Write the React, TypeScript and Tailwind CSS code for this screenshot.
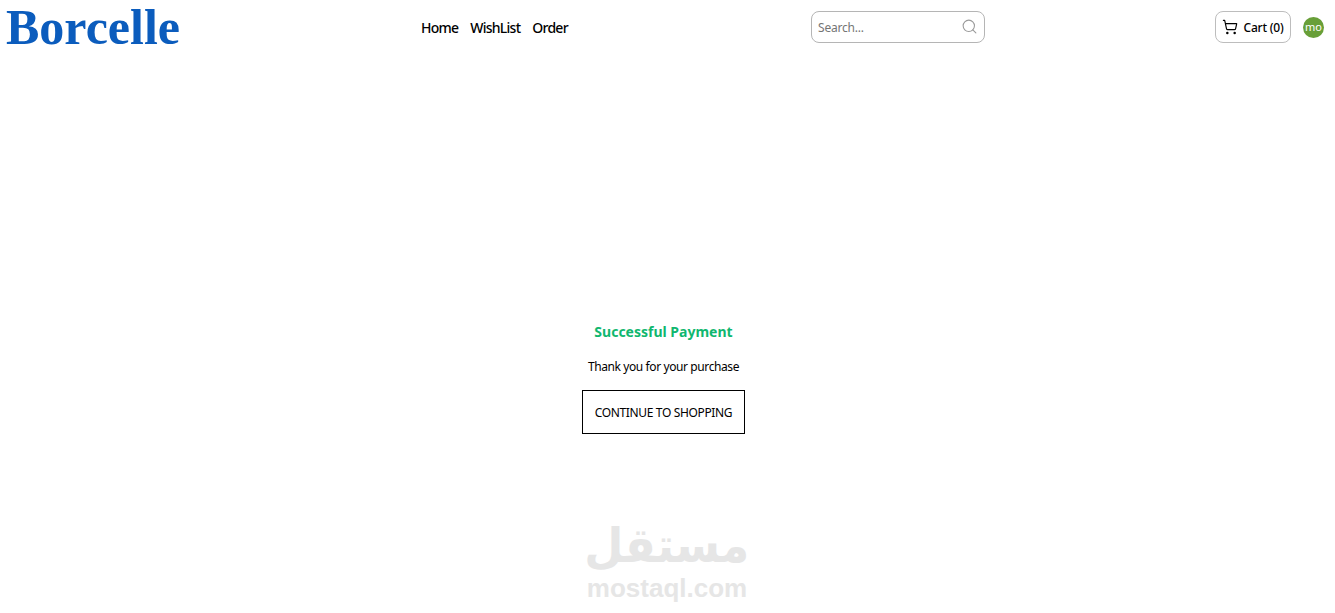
import { Search, ShoppingCart } from 'lucide-react';

const uiFont = "font-['Noto_Sans','Open_Sans',sans-serif]";

const navLinks = ['Home', 'WishList', 'Order'];

const Navbar = () => (
  <header className="flex h-[54px] items-center pl-[5px] pr-[11px]">
    {/* Logo */}
    <a className="w-[176px] pl-px text-[50px] leading-none font-bold text-[#0b5cbd] font-['Liberation_Serif',serif]">
      Borcelle
    </a>

    {/* Navigation */}
    <nav className="ml-[240px] flex items-center gap-[12px] text-[14px] font-medium tracking-[-0.75px] text-black">
      {navLinks.map((link) => (
        <a key={link}>{link}</a>
      ))}
    </nav>

    {/* Search */}
    <div className="ml-auto flex h-[32px] w-[174px] items-center justify-between rounded-lg border border-[#b5b5b5] pl-[6px] pr-[6px]">
      <span className="pt-[2px] text-[12px] tracking-[-0.2px] text-[#757575]">Search...</span>
      <Search className="h-[17px] w-[17px] -translate-y-px text-[#9a9a9a]" strokeWidth={1.5} />
    </div>

    {/* Cart + avatar */}
    <div className="ml-[230px] flex items-center gap-[12px]">
      <button className="flex h-[32px] w-[76px] items-center justify-center gap-[5px] rounded-lg border border-[#bdbdbd]">
        <ShoppingCart className="h-[16px] w-[16px] text-black" strokeWidth={1.75} />
        <span className="pt-[2px] text-[12px] font-medium tracking-[-0.2px] text-black">Cart (0)</span>
      </button>
      <div className="flex h-[21px] w-[21px] items-center justify-center rounded-full bg-[#689f38] pb-[2px] text-[11px] leading-none text-white">
        mo
      </div>
    </div>
  </header>
);

export default function App() {
  return (
    <div className={`relative h-[613px] overflow-hidden bg-white ${uiFont}`}>
      <Navbar />

      <main className="flex flex-col items-center pt-[268px] pr-[8px]">
        <h1 className="text-[14px] leading-[20px] font-bold text-[#10b76f]">Successful Payment</h1>
        <p className="mt-[15px] text-[12px] leading-[20px] tracking-[-0.4px] text-black">Thank you for your purchase</p>
        <button className="mt-[13px] h-[44px] w-[163px] border border-black pt-[2px] text-[12px] tracking-[-0.35px] text-black">
          CONTINUE TO SHOPPING
        </button>
      </main>

      {/* Watermark */}
      <div className="absolute bottom-[10px] left-[586px] flex w-[162px] flex-col items-center text-[#e6e6e6]">
        <span dir="rtl" className="scale-x-[0.94] text-[48px] leading-[56px] font-bold font-['DejaVu_Sans',sans-serif]">مستقل</span>
        <span className="text-[26px] leading-[30px] font-bold font-['Liberation_Sans',sans-serif]">mostaql.com</span>
      </div>
    </div>
  );
}
